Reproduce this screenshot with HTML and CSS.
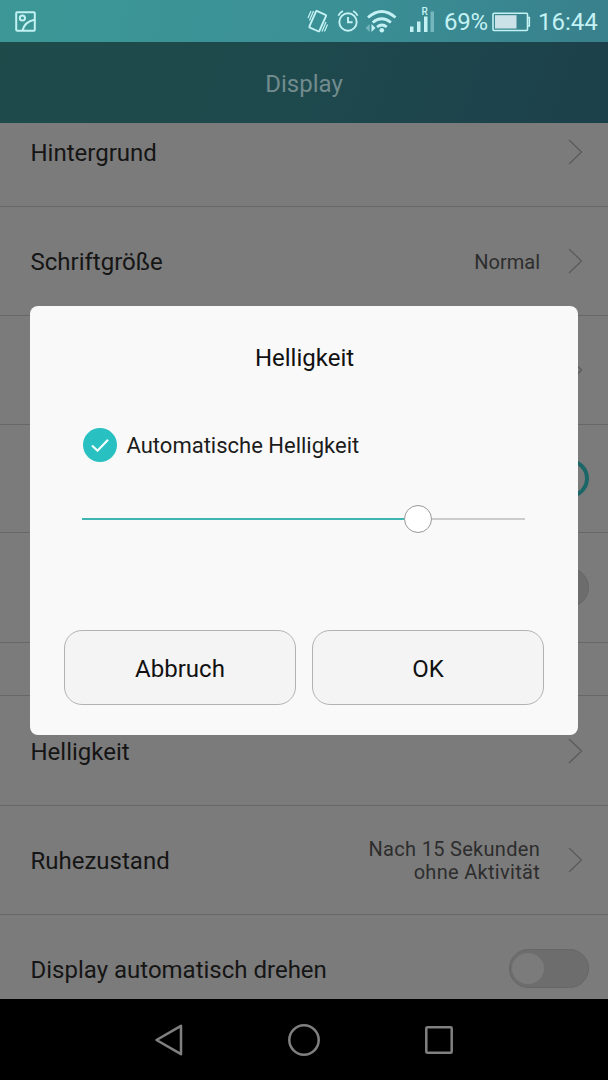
FILE: index.html
```html
<!DOCTYPE html>
<html lang="de">
<head>
<meta charset="utf-8">
<title>Display</title>
<link rel="stylesheet" href="styles.css">
</head>
<body>
<div class="phone">
  <header class="status">
    <svg class="ic-picture" width="22" height="22" viewBox="0 0 22 22"><rect x="1.200" y="1.200" width="18.600" height="18.600" rx="1"/><circle cx="7.400" cy="7" r="2.600"/><path d="M7.500 19.500C9 14 13 10 19.500 8.800"/></svg>
    <svg class="status-icons" width="144" height="42" viewBox="300 1 144 42">
      <g class="line"><rect x="312.200" y="12.200" width="11" height="18" rx="1" transform="rotate(24 317.700 21.200)"/><path class="thin" d="M311 11l-3 7M313.500 11l-4 9.500M324.500 31.500l3-7M322 31.500l4-9.500"/>
      <circle cx="348" cy="22" r="8.700"/><path d="M348 17v5.200h4.600M338.300 15.700q1.500-3.300 4.600-4.700M357.700 15.700q-1.500-3.300-4.600-4.700"/></g>
      <g class="wave"><path d="M368 17.500q13.700-12 27.500 0M372.700 22.500q9-7.500 18.200 0M377 27q5-4 9.800 0"/></g>
      <circle class="solid" cx="381.800" cy="30.200" r="2.300"/><path class="solid" d="M371.500 24v8l4-4z"/><path class="pale" d="M369.700 24v8l-4-4z"/>
      <path class="solid" d="M410 26.500h3.500v5.500H410zM417 21.500h3.500v10.500H417zM424 16.500h3.500v15.500H424z"/><path class="pale" d="M430.500 11.500h3.500v20.500h-3.500z"/>
      <text class="roam" x="421.500" y="15">R</text>
    </svg>
    <span class="percent">69%</span>
    <svg class="battery" width="39" height="20" viewBox="0 0 39 20"><rect class="shell" x="1" y="1.200" width="34.500" height="17.300" rx="1"/><rect class="charge" x="3" y="3.200" width="21.500" height="13.300"/><path class="shell" d="M36 5.500h1.300v8.500H36"/></svg>
    <time class="clock">16:44</time>
  </header>
  <h1 class="header"><span>Display</span></h1>
  <main class="list">
    <div class="row first"><span class="label">Hintergrund</span><svg class="chevron" viewBox="0 0 15 26"><path d="M1 1l12.500 12L1 25"/></svg></div>
    <div class="row"><span class="label">Schriftgröße</span><span class="value">Normal</span><svg class="chevron" viewBox="0 0 15 26"><path d="M1 1l12.500 12L1 25"/></svg></div>
    <div class="row"><svg class="chevron" viewBox="0 0 15 26"><path d="M1 1l12.500 12L1 25"/></svg></div>
    <div class="row short"><span class="switch on"></span></div>
    <div class="row tall"><span class="switch"></span></div>
    <div class="row section"></div>
    <div class="row tall"><span class="label">Helligkeit</span><svg class="chevron" viewBox="0 0 15 26"><path d="M1 1l12.500 12L1 25"/></svg></div>
    <div class="row"><span class="label">Ruhezustand</span><span class="value idle">Nach 15 Sekunden<br>ohne Aktivität</span><svg class="chevron" viewBox="0 0 15 26"><path d="M1 1l12.500 12L1 25"/></svg></div>
    <div class="row last"><span class="label">Display automatisch drehen</span><span class="switch"></span></div>
  </main>
  <nav class="nav">
    <svg width="28" height="32" viewBox="0 0 28 32"><path d="M1.500 16L26 1.800V30.200z"/></svg>
    <svg width="32" height="32" viewBox="0 0 32 32"><circle cx="16" cy="16" r="14.700"/></svg>
    <svg width="28" height="28" viewBox="0 0 28 28"><rect x="1.300" y="1.300" width="25.400" height="25.400" rx="1"/></svg>
  </nav>
  <section class="dialog">
    <h2 class="title"><span>Helligkeit</span></h2>
    <div class="auto"><svg class="check" width="34" height="34" viewBox="0 0 34 34"><circle cx="17" cy="17" r="17"/><path d="M9 17.500l5.500 5.300L25 11.700"/></svg><span class="auto-label">Automatische Helligkeit</span></div>
    <div class="slider"><span class="filled"></span><span class="knob"></span><span class="rest"></span></div>
    <div class="buttons"><button><span>Abbruch</span></button><button><span>OK</span></button></div>
  </section>
</div>
</body>
</html>
```
FILE: styles.css
```css
* { box-sizing: border-box; }
body { margin: 0; font-family: Roboto, "Liberation Sans", sans-serif; }
.phone { position: relative; width: 608px; height: 1080px; overflow: hidden; background: #000; display: flex; flex-direction: column; }
.status { height: 42px; display: flex; align-items: center; color: #c4f2f4; background: linear-gradient(100deg, #3c9796, #3b9096 55%, #38808c); padding: 2px 0 0 15px; }
.ic-picture { fill: none; stroke: #c4f2f4; stroke-width: 2; }
.status-icons { margin-left: 263px; }
.line { fill: none; stroke: #c4f2f4; stroke-width: 1.9; }
.thin { stroke-width: 1.2; }
.wave { fill: none; stroke: #c4f2f4; stroke-width: 2.8; }
.solid { fill: #c4f2f4; }
.pale { fill: #76b7be; }
.roam { fill: #c4f2f4; font-size: 10px; font-weight: 500; }
.percent { font-size: 24px; width: 48px; white-space: nowrap; letter-spacing: -0.3px; }
.battery { flex: none; }
.shell { fill: none; stroke: #c4f2f4; stroke-width: 1.6; }
.charge { fill: #cbe3e8; }
.clock { font-size: 24px; margin-left: 7px; }
.header { margin: 0; height: 81px; flex: none; display: flex; align-items: center; justify-content: center; padding-top: 2px; font-size: 24px; font-weight: 400; color: #728b8d; background: linear-gradient(110deg, #1e4b4a, #1e494d 50%, #1c404a); }
.list { height: 876px; overflow: hidden; background: #7b7b7b; color: #151515; display: flex; flex-direction: column; }
.row { height: 109px; flex: none; display: flex; align-items: center; justify-content: flex-end; padding: 0 25px 0 30.5px; border-bottom: 1px solid #676767; }
.first { margin-top: -25px; }
.short { height: 108px; }
.tall { height: 110px; }
.section { height: 53px; }
.label { margin-right: auto; font-size: 24px; line-height: 28px; padding-top: 2px; }
.value { font-size: 20px; line-height: 23px; text-align: right; color: #2d2d2d; padding-top: 2px; margin-right: 28px; }
.idle { letter-spacing: 0.3px; }
.chevron { width: 15px; height: 26px; fill: none; stroke: #5b5b5b; stroke-width: 1.3; }
.switch { width: 80px; height: 39px; border: 1px solid #666; border-radius: 20px; background: #6d6d6d; margin-right: -6px; padding: 3px 2px; }
.switch::before { content: ""; display: block; width: 32px; height: 31px; border-radius: 50%; background: #7b7b7b; }
.last .switch { margin-bottom: 2px; }
.on { border: 4px solid #1b6767; background: #7b7b7b; }
.nav { flex: 1; display: flex; align-items: center; justify-content: center; gap: 105px; }
.nav svg { fill: none; stroke: #808080; stroke-width: 2.5; stroke-linejoin: round; }
.dialog { position: absolute; left: 30px; top: 306px; width: 548px; height: 429px; border-radius: 8px; background: #f9f9f9; color: #1c1c1c; display: flex; flex-direction: column; }
.title { margin: 0; padding: 38px 0 0 1px; height: 121px; text-align: center; font-size: 24px; line-height: 28px; font-weight: 400; color: #111; }
.auto { display: flex; align-items: center; gap: 10px; height: 35px; padding-left: 52.5px; font-size: 22px; }
.auto-label { padding-top: 2px; }
.check { fill: #28c0c1; }
.check path { fill: none; stroke: #f4ffff; stroke-width: 2.2; }
.slider { display: flex; align-items: center; height: 28px; margin: 43px 53px 0 52px; }
.filled { width: 322px; height: 2px; background: #3eb5b1; }
.knob { width: 28px; height: 28px; border: 1px solid #999; border-radius: 50%; background: #fff; }
.rest { flex: 1; height: 2px; background: #ccc; }
.buttons { display: flex; gap: 16px; margin: 97px 34px 0; }
.buttons button { flex: 1; height: 75px; border: 1px solid #b2b2b2; border-radius: 18px; background: #f4f4f4; color: #111; font: 24px Roboto, sans-serif; padding: 2px 0 0; }
```
